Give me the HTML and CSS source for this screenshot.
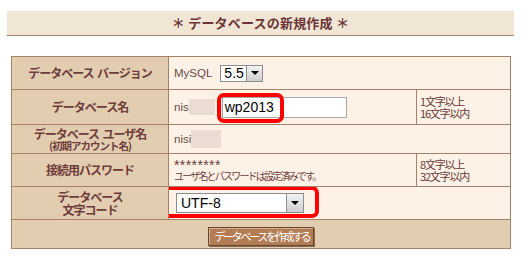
FILE: index.html
```html
<!DOCTYPE html>
<html lang="ja">
<head>
<meta charset="utf-8">
<link rel="stylesheet" href="styles.css">
</head>
<body>
<div class="page">
  <div class="title">＊ データベースの新規作成 ＊</div>
  <table class="form">
    <colgroup><col class="c1"><col class="c2"><col class="c3"></colgroup>
    <tr class="r1">
      <th>データベース&nbsp;&nbsp;バージョン</th>
      <td colspan="2" class="val"><span class="plain">MySQL</span><span class="sel sel-v"><span class="sel-text">5.5</span><span class="sel-btn"><span class="tri"></span></span></span></td>
    </tr>
    <tr class="r2">
      <th>データベース名</th>
      <td class="val"><span class="plain">nis</span><span class="blur"></span><span class="wrap"><span class="input">wp2013</span><span class="hl hl1"></span></span></td>
      <td class="note"><span class="ln">1文字以上</span><span class="ln">16文字以内</span></td>
    </tr>
    <tr class="r3">
      <th><span class="ln">データベース&nbsp;&nbsp;ユーザ名</span><span class="ln sub">(初期アカウント名)</span></th>
      <td colspan="2" class="val"><span class="plain">nisi</span><span class="blur blur2"></span></td>
    </tr>
    <tr class="r4">
      <th>接続用パスワード</th>
      <td class="val small"><span class="ln stars">********</span><span class="ln">ユーザ名とパスワードは設定済みです。</span></td>
      <td class="note"><span class="ln">8文字以上</span><span class="ln">32文字以内</span></td>
    </tr>
    <tr class="r5">
      <th class="two"><span class="ln">データベース</span><span class="ln">文字コード</span></th>
      <td colspan="2" class="val"><span class="wrap"><span class="sel sel-u"><span class="sel-text">UTF-8</span><span class="sel-btn"><span class="tri"></span></span></span><span class="hl hl2"></span></span></td>
    </tr>
    <tr class="r6">
      <td colspan="3" class="act"><span class="btn">データベースを作成する</span></td>
    </tr>
  </table>
</div>
</body>
</html>
```

FILE: styles.css
```css
html, body { margin: 0; padding: 0; background: #fff; }
body { font-family: "Noto Sans CJK JP", "Liberation Sans", sans-serif; color: #6b3b3b; }
.page { padding: 11px 0 0 7px; }
.title {
  width: 507px;
  height: 24px;
  background: #f1e5d6;
  border-bottom: 1px solid #a3826a;
  text-align: center;
  font-weight: bold;
  font-size: 13px;
  line-height: 24px;
  color: #6b3535;
  letter-spacing: 0.2px;
}
.form {
  margin: 20px 0 0 4px;
  width: 499px;
  border-collapse: collapse;
  table-layout: fixed;
  border: 1px solid #a5836a;
}
.c1 { width: 157px; }
.c2 { width: 248px; }
.c3 { width: 94px; }
.form th, .form td {
  border: 1px solid #a5836a;
  padding: 0;
  vertical-align: middle;
  overflow: hidden;
}
.ln { display: block; }
.form th {
  background: #e3cdb0;
  font-size: 12px;
  font-weight: bold;
  color: #6e3c3c;
  text-align: center;
  line-height: 16px;
  letter-spacing: -1px;
}
.form th .ln { height: 13px; line-height: 13px; }
.form th .sub { font-size: 10.5px; height: 12px; line-height: 12px; }
.r1 { height: 33px; }
.r2 { height: 35px; }
.r3 { height: 29px; }
.r4 { height: 33px; }
.r5 { height: 33px; }
.r6 { height: 29px; }
.val {
  background: #fdf2e5;
  padding-left: 5px !important;
  font-family: "Liberation Sans", Arial, sans-serif;
  font-size: 11.5px;
  color: #6a4c48;
  white-space: nowrap;
}
.val > * { vertical-align: middle; }
.plain { display: inline-block; }
.sel {
  display: inline-flex;
  align-items: stretch;
  background: #fff;
  border: 1px solid #8d8d8d;
  box-sizing: border-box;
  height: 17px;
  font-family: "Liberation Sans", Arial, sans-serif;
  font-size: 14px;
  color: #000;
}
.sel-v { width: 43px; margin-left: 8px; }
.sel-u { width: 128px; height: 20px; }
.sel-text { flex: 1; padding-left: 3px; line-height: 15px; }
.sel-u .sel-text { line-height: 18px; padding-left: 4px; }
.sel-btn {
  width: 15px;
  border-left: 1px solid #8d8d8d;
  background: linear-gradient(#f2f2f2, #cfcfcf);
  display: flex;
  align-items: center;
  justify-content: center;
}
.sel-u .sel-btn { width: 16px; }
.tri {
  width: 0; height: 0;
  border-left: 4px solid transparent;
  border-right: 4px solid transparent;
  border-top: 4px solid #000;
}
.blur {
  display: inline-block;
  width: 26px;
  height: 16px;
  background: #eadcd2;
}
.blur2 { width: 30px; height: 18px; }
.wrap { position: relative; display: inline-block; }
.r2 .wrap { margin-left: 7px; }
.input {
  display: inline-block;
  box-sizing: border-box;
  width: 125px;
  height: 21px;
  background: #fff;
  border: 1px solid #a9a9a9;
  font-size: 14px;
  line-height: 19px;
  padding-left: 2px;
  color: #000;
}
.hl {
  position: absolute;
  box-sizing: border-box;
  border: 4px solid #ff0000;
  border-radius: 7px;
}
.hl1 { left: -5px; top: -4px; width: 67px; height: 30px; }
.hl2 { left: -19px; top: -7px; width: 162px; height: 32px; }
.r5 .wrap { margin-left: 2px; }
.small {
  font-family: "Noto Sans CJK JP", sans-serif;
  font-size: 10px;
  letter-spacing: -1.8px;
  color: #6b3b3b;
}
.small .ln { height: 14px; line-height: 14px; }
.small .stars {
  font-family: "Liberation Sans", Arial, sans-serif;
  font-size: 14px;
  letter-spacing: 0.4px;
  line-height: 16px;
  height: 12px;
}
.note {
  background: #fdf2e5;
  font-size: 11px;
  letter-spacing: -1.2px;
  color: #6b3b3b;
  padding-left: 3px !important;
}
.note .ln { height: 12px; line-height: 12px; }
.act {
  background: #e3cdb0;
  text-align: center;
}
.btn {
  display: inline-block;
  box-sizing: border-box;
  width: 106px;
  height: 19px;
  margin-top: 1px;
  background: #b27d55;
  border: 1px solid #6a4630;
  box-shadow: inset 1px 1px 0 #d9b08c, 1px 1px 0 #8b6a52;
  color: #fff;
  font-size: 11px;
  letter-spacing: -2.3px;
  line-height: 17px;
  white-space: nowrap;
  vertical-align: middle;
  text-indent: 2px;
}
```
